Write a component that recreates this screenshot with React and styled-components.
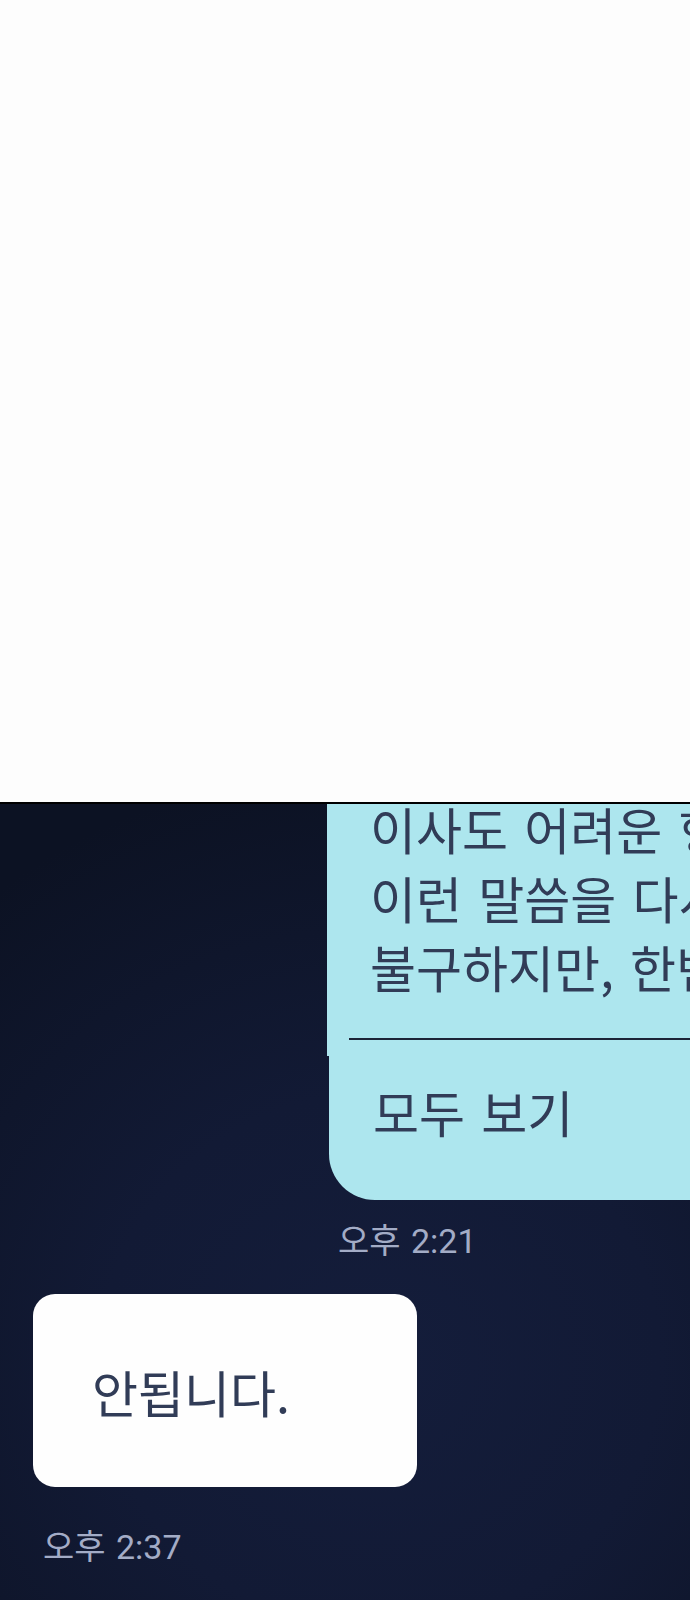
import React from "react"
import styled, { createGlobalStyle } from "styled-components"

const GlobalStyle = createGlobalStyle`
  body {
    margin: 0;
    background: #fdfdfd;
  }
`

const Page = styled.div`
  display: flex;
  flex-direction: column;
  width: 690px;
`

const Blank = styled.div`
  height: 802px;
  background: #fdfdfd;
`

const ChatPanel = styled.section`
  height: 796px;
  border-top: 2px solid #000;
  overflow: hidden;
  display: flex;
  flex-direction: column;
  background: radial-gradient(
    ellipse 90% 75% at 55% 70%,
    #141d3b 0%,
    #121a35 45%,
    #0c1223 100%
  );
`

const MessageRow = styled.div`
  display: flex;
  flex-direction: column;
  align-items: flex-start;
  padding-left: ${(p) => p.$indent}px;
  margin-top: ${(p) => p.$gap}px;
`

const SentBubble = styled.div`
  width: 600px;
  flex-shrink: 0;
  background: #ade6ee;
  border-radius: 0 0 0 46px;
  color: #313c57;
  font-family: "Noto Sans CJK KR", "Noto Sans", sans-serif;
  font-size: 50px;
  line-height: 69px;
  word-spacing: 5px;
  white-space: nowrap;
`

/* the clipped body of a long message, with its preview cut line */
const Preview = styled.div`
  margin-left: -2px;
  padding: 0 0 16px 22px;
  background: #ade6ee;
`

const PreviewText = styled.p`
  margin: 0;
  padding-left: 21px;
`

const CutLine = styled.hr`
  margin: 37px 0 0;
  border: 0;
  height: 2px;
  background: #1c2437;
`

const ShowAll = styled.div`
  padding: 21px 0 54px 44px;
`

const ReceivedBubble = styled.div`
  width: 384px;
  height: 193px;
  box-sizing: border-box;
  display: flex;
  align-items: center;
  padding-left: 59px;
  background: #fefefe;
  border-radius: 22px;
  color: #313c57;
  font-family: "Noto Sans CJK KR", "Noto Sans", sans-serif;
  font-size: 50px;
`

const Time = styled.span`
  margin-top: ${(p) => p.$gap}px;
  margin-left: ${(p) => p.$shift}px;
  font-family: Roboto, "Noto Sans CJK KR", sans-serif;
  font-size: 34px;
  line-height: 40px;
  word-spacing: 2px;
  color: #a3acc6;
`

export default function App() {
  return (
    <Page>
      <GlobalStyle />
      <Blank />
      <ChatPanel>
        <MessageRow $indent={329} $gap={-10}>
          <SentBubble>
            <Preview>
              <PreviewText>
                이사도 어려운 형편에 정말 죄송합니다.
                <br />
                이런 말씀을 다시 드리기 송구함에도
                <br />
                불구하지만, 한번만 더 부탁드립니다.
              </PreviewText>
              <CutLine />
            </Preview>
            <ShowAll>모두 보기</ShowAll>
          </SentBubble>
          <Time $gap={21} $shift={9}>
            오후 2:21
          </Time>
        </MessageRow>
        <MessageRow $indent={33} $gap={33}>
          <ReceivedBubble>안됩니다.</ReceivedBubble>
          <Time $gap={40} $shift={10}>
            오후 2:37
          </Time>
        </MessageRow>
      </ChatPanel>
    </Page>
  )
}
